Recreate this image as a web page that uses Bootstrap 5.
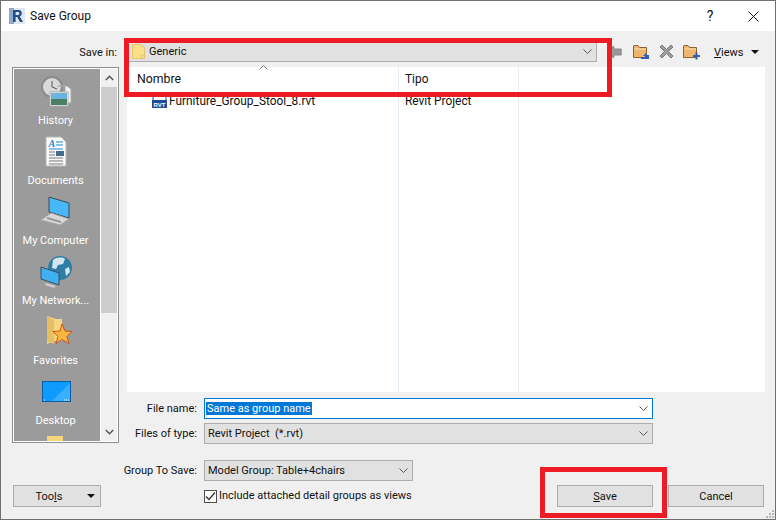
<!DOCTYPE html>
<html lang="en">
<head>
<meta charset="UTF-8">
<title>Save Group</title>
<link href="https://cdn.jsdelivr.net/npm/bootstrap@5.3.2/dist/css/bootstrap.min.css" rel="stylesheet">
<style>
  html, body { margin: 0; background: #f0f0f0; }
  body { font-family: Roboto, "Liberation Sans", sans-serif; font-size: 11px; line-height: 14px; color: #111; overflow: hidden; }
  .dlg { position: relative; width: 776px; height: 520px; border: 1px solid #6f6f6f; background: #f0f0f0; }
  .titlebar { height: 30px; background: #fff; padding-left: 8px; }
  .titlebar .ttl { margin-left: 5px; font-size: 12px; }
  .helpmark { margin-left: auto; width: 12px; text-align: center; font-size: 14px; }
  .closex { margin-left: 32px; margin-right: 16px; }
  .toolrow { height: 36px; padding-top: 5px; }
  .lbl { text-align: right; flex: none; }
  .lbl-top { width: 116px; margin-right: 9px; padding-top: 3px; }
  .combo { background: #e1e1e1; border: 1px solid #adadad; height: 21px; padding: 0 4px 0 5px; }
  .combo .chev { margin-left: auto; }
  .combo-top { width: 471px; }
  .combo-txt { padding-top: 1px; }
  .tool-icons { margin-left: 11px; }
  .tool-back { margin-right: 3px; }
  .views { margin-left: 14px; padding-top: 2px; }
  .caret-dn { width: 0; height: 0; border: 4px solid transparent; border-top: 4px solid #111; border-bottom: 0; border-left-width: 4.5px; border-right-width: 4.5px; }
  .midrow { height: 325px; }
  .places { margin-left: 11px; width: 107px; height: 376px; border: 1px solid #8f8f8f; background: #fff; padding: 1px; }
  .places-in { width: 87px; background: #9b9b9b; overflow: hidden; }
  .place { height: 60px; flex: none; color: #fff; padding: 5px 3px 0 0; }
  .place svg { height: 36px; width: 36px; display: block; }
  .place span { margin-top: 4px; white-space: nowrap; }
  .sbar { width: 16px; margin-left: 1px; background: #f0f0f0; }
  .sbar .arr { height: 18px; }
  .sbar .thumb { height: 226px; background: #cdcdcd; }
  .flist { margin-left: 8px; width: 638px; background: #fff; position: relative; font-size: 11.9px; }
  .fhead { height: 23px; }
  .col-a .fhead { font-size: 12.3px; }
  .col-a { width: 272px; padding-left: 10px; border-right: 1px solid #e5eef7; position: relative; }
  .col-b { width: 120px; padding-left: 6px; border-right: 1px solid #e5eef7; }
  .fcols { height: 325px; }
  .fname { padding-left: 23px; margin-top: 4px; }
  .fname svg { margin-left: -8px; margin-right: 2px; }
  .sort-up { position: absolute; left: 132px; top: -2px; }
  .lbl-form { width: 196px; margin-right: 7px; }
  .field { width: 449px; height: 21px; background: #e1e1e1; border: 1px solid #adadad; padding: 0 4px 0 3px; }
  .field-active { background: #fff; border-color: #0078d7; padding-left: 1px; }
  .sel-text { background: #0078d7; color: #fff; padding: 0 1px; line-height: 13px; }
  .field-group { width: 209px; }
  .row-file { margin-top: 6px; }
  .row-type { margin-top: 4px; }
  .row-group { margin-top: 16px; }
  .row-check { margin-top: 8px; padding-left: 203px; }
  .chk-box { width: 13px; height: 13px; border: 1px solid #4d4d4d; background: #fff; flex: none; margin-right: 2px; }
  .foot { position: absolute; left: 0; right: 0; bottom: 12px; padding-left: 12px; }
  .btn-win { --bs-btn-padding-y: 0; --bs-btn-font-size: 11px; --bs-btn-border-radius: 0; --bs-btn-color: #111; --bs-btn-bg: #e1e1e1; --bs-btn-border-color: #adadad; height: 22px; line-height: 20px; font-family: inherit; padding-top: 1px; }
  .btn-tools { width: 88px; padding-left: 0; padding-right: 16px; position: relative; }
  .btn-tools .caret-dn { position: absolute; right: 5px; top: 8px; }
  .btn-act { width: 96px; }
  .btn-save { margin-left: auto; }
  .btn-cancel { margin-left: 15px; margin-right: 11px; }
  .grip { position: absolute; right: 0; bottom: 0; }
  .redbox { position: absolute; border: 5px solid #ed1c24; pointer-events: none; }
  .red-a { left: 123px; top: 37px; width: 488px; height: 59px; }
  .red-b { left: 539px; top: 466px; width: 127px; height: 51px; }
</style>
</head>
<body>
<div class="dlg d-flex flex-column">

  <div class="titlebar d-flex align-items-center">
    <svg width="16" height="16" viewBox="0 0 16 16"><rect width="16" height="16" fill="#dfe7f0"/><rect x="0" y="0" width="5" height="16" fill="#8fa9c8"/><path d="M4 14V2h5.200c2.400 0 3.600 1.200 3.600 3.300 0 1.600-.8 2.700-2.100 3.100L14 14h-3l-2.800-5H6.600v5z" fill="#1f4f86"/><path d="M6.600 4.100v3h2.300c1 0 1.500-.6 1.500-1.500s-.5-1.500-1.500-1.500z" fill="#dfe7f0"/></svg>
    <span class="ttl">Save Group</span>
    <span class="helpmark">?</span>
    <svg class="closex" width="11" height="11" viewBox="0 0 11 11"><path d="M.5.500l10 10M10.500.500l-10 10" stroke="#111" fill="none"/></svg>
  </div>

  <div class="toolrow d-flex align-items-center">
    <span class="lbl lbl-top">Save in:</span>
    <div class="combo combo-top d-flex align-items-center">
      <svg class="me-1" width="13" height="15" viewBox="0 0 13 15"><path d="M.5.500h8l4 3v11H.5z" fill="#fbdf8a" stroke="#e8c468"/><path d="M9.500 14.500V11h3" fill="none" stroke="#e8c468"/></svg>
      <span class="combo-txt">Generic</span>
      <svg class="chev" width="9" height="6" viewBox="0 0 9 6"><path d="M.5.500l4 4 4-4" fill="none" stroke="#555"/></svg>
    </div>
    <div class="tool-icons d-flex align-items-center gap-2">
      <svg class="tool-back" width="14" height="16" viewBox="0 0 17 16" preserveAspectRatio="none"><path d="M0 8l7-6v3h9v6H7v3z" fill="#9a9a9a" stroke="#808080"/></svg>
      <svg width="17" height="17" viewBox="0 0 17 17"><path d="M.5 3V14.500h13V4.500H6.500L5 2.500H1z" fill="#eeb56f" stroke="#8a6232"/><path d="M1 6h12" stroke="#f8dcb0"/><path d="M8 16h8v-4h-2l-1-2-3 3h2v1H8z" fill="#2f5fb8"/></svg>
      <svg width="17" height="17" viewBox="0 0 17 17"><path d="M4 2L8.500 6.500 13 2l2 2-4.500 4.500L15 13l-2 2-4.500-4.500L4 15l-2-2 4.500-4.500L2 4z" fill="#9c9c9c" stroke="#7a7a7a"/></svg>
      <svg width="17" height="17" viewBox="0 0 17 17"><path d="M.5 3V14.500h13V4.500H6.500L5 2.500H1z" fill="#eeb56f" stroke="#8a6232"/><path d="M1 6h12" stroke="#f8dcb0"/><path d="M10 12h2.500V9.500h2V12H17v2h-2.500v2.500h-2V14H10z" fill="#2f5fb8"/></svg>
    </div>
    <span class="views"><u>V</u>iews</span>
    <span class="caret-dn ms-2"></span>
  </div>

  <div class="midrow d-flex">
    <div class="places d-flex flex-shrink-0">
      <div class="places-in d-flex flex-column">
        <div class="place d-flex flex-column align-items-center">
          <svg viewBox="0 0 36 36"><circle cx="14" cy="13" r="10" fill="#d9d9d9" stroke="#8b8b8b" stroke-width="2"/><path d="M14 7v6l5 2" stroke="#555" fill="none"/><path d="M20 12h9l4 3v14h-6V12z" fill="#f2f2f2" stroke="#a8a8a8"/><rect x="12" y="18" width="18" height="14" fill="#fff" stroke="#aaa"/><rect x="13" y="19" width="16" height="6" fill="#6eb3dc"/><rect x="13" y="25" width="16" height="6" fill="#4a7f62"/></svg>
          <span>History</span>
        </div>
        <div class="place d-flex flex-column align-items-center">
          <svg viewBox="0 0 36 36"><path d="M8 3h15l5 5v24H8z" fill="#fafafa" stroke="#b5b5b5"/><text x="10.500" y="13" font-size="10" font-weight="700" font-style="italic" fill="#1c87d6" font-family="Liberation Serif, serif">A</text><path d="M18 8h7M18 11h7M11 15h14" stroke="#1c87d6"/><path d="M11 18h6M11 21h6M11 24h14M11 27h14M11 30h14" stroke="#777"/><rect x="18" y="17" width="8" height="5" fill="#3e6f8c"/></svg>
          <span>Documents</span>
        </div>
        <div class="place d-flex flex-column align-items-center">
          <svg viewBox="0 0 36 36"><path d="M11 3l20 6v15l-20-6z" fill="#46b7f7" stroke="#3a4a58"/><path d="M13 19l18 6-9 6L3 26z" fill="#d8d8d8" stroke="#a5a5a5"/><path d="M9 24l14 4" stroke="#999" stroke-width="2"/></svg>
          <span>My Computer</span>
        </div>
        <div class="place d-flex flex-column align-items-center">
          <svg viewBox="0 0 36 36"><circle cx="22" cy="14" r="12" fill="#2f7ea6"/><path d="M15 6c4-3 9-3 12-1l-2 5-5 1-2 4-4-1zM27 15l4-2 1 5-4 4z" fill="#d5e6ee"/><path d="M3 13l18 6v12L3 25z" fill="#3fb0f0" stroke="#39505f"/><path d="M8 29l10 3-2 2-9-3z" fill="#ccc"/></svg>
          <span>My Network...</span>
        </div>
        <div class="place d-flex flex-column align-items-center">
          <svg viewBox="0 0 36 36"><path d="M9 2l9 3h6v22l-8 0-7 3z" fill="#f5d67f"/><path d="M9 2l7 4v24l-7-3z" fill="#e5bf62"/><path d="M24 10l3 7 7 .500-5 5 2 7-7-4-6 4 2-7-5-5 7-.5z" fill="#f6b73c" stroke="#c7541e"/></svg>
          <span>Favorites</span>
        </div>
        <div class="place d-flex flex-column align-items-center">
          <svg viewBox="0 0 36 36"><rect x="4.500" y="7.500" width="28" height="20" fill="#0d9bff" stroke="#0a5ea8"/><path d="M14 27L32 9v18z" fill="#39b0ff"/><path d="M6 26h1M26 26h5" stroke="#fff" stroke-dasharray="1 1"/></svg>
          <span>Desktop</span>
        </div>
        <div class="place d-flex flex-column align-items-center">
          <svg viewBox="0 0 36 36"><path d="M9 2h16v34H9z" fill="#f5d67f"/></svg>
        </div>
      </div>
      <div class="sbar d-flex flex-column">
        <div class="arr d-flex align-items-center justify-content-center"><svg width="9" height="6" viewBox="0 0 9 6"><path d="M.8 5l3.700-3.700L8.200 5" fill="none" stroke="#555" stroke-width="1.500"/></svg></div>
        <div class="thumb"></div>
        <div class="flex-grow-1"></div>
        <div class="arr d-flex align-items-center justify-content-center"><svg width="9" height="6" viewBox="0 0 9 6"><path d="M.8 1l3.700 3.700L8.200 1" fill="none" stroke="#555" stroke-width="1.500"/></svg></div>
      </div>
    </div>

    <div class="flist">
      <div class="fcols d-flex">
        <div class="col-a">
          <div class="fhead d-flex align-items-center">Nombre</div>
          <svg class="sort-up" width="9" height="5" viewBox="0 0 9 5"><path d="M.5 4.500l4-4 4 4" fill="none" stroke="#777"/></svg>
          <div class="fname d-flex align-items-center">
            <svg width="15" height="14" viewBox="0 0 15 14"><path d="M1 .5h10l3 3v10H1z" fill="#fff" stroke="#1f4e96"/><rect x="0" y="6" width="15" height="8" fill="#1f4e96"/><text x="1.500" y="12.500" font-size="6" font-weight="700" fill="#fff" font-family="Liberation Sans, sans-serif">RVT</text></svg>
            <span>Furniture_Group_Stool_8.rvt</span>
          </div>
        </div>
        <div class="col-b">
          <div class="fhead d-flex align-items-center">Tipo</div>
          <div class="mt-1">Revit Project</div>
        </div>
      </div>
    </div>
  </div>

  <div class="row-file d-flex align-items-center">
    <span class="lbl lbl-form">File name:</span>
    <div class="field field-active d-flex align-items-center">
      <span class="sel-text">Same as group name</span>
      <svg class="ms-auto" width="9" height="6" viewBox="0 0 9 6"><path d="M.5.500l4 4 4-4" fill="none" stroke="#555"/></svg>
    </div>
  </div>
  <div class="row-type d-flex align-items-center">
    <span class="lbl lbl-form">Files of type:</span>
    <div class="field d-flex align-items-center">
      <span>Revit Project&nbsp; (*.rvt)</span>
      <svg class="ms-auto" width="9" height="6" viewBox="0 0 9 6"><path d="M.5.500l4 4 4-4" fill="none" stroke="#555"/></svg>
    </div>
  </div>
  <div class="row-group d-flex align-items-center">
    <span class="lbl lbl-form">Group To Save:</span>
    <div class="field field-group d-flex align-items-center">
      <span>Model Group: Table+4chairs</span>
      <svg class="ms-auto" width="9" height="6" viewBox="0 0 9 6"><path d="M.5.500l4 4 4-4" fill="none" stroke="#555"/></svg>
    </div>
  </div>
  <div class="row-check d-flex align-items-center">
    <span class="chk-box d-flex align-items-center justify-content-center"><svg width="11" height="9" viewBox="0 0 11 9"><path d="M1 4.500l3 3 6-7" fill="none" stroke="#333" stroke-width="1.300"/></svg></span>
    <span>Include attached detail groups as views</span>
  </div>

  <div class="foot d-flex align-items-center">
    <button type="button" class="btn btn-win btn-tools">Too<u>l</u>s<span class="caret-dn"></span></button>
    <button type="button" class="btn btn-win btn-act btn-save"><u>S</u>ave</button>
    <button type="button" class="btn btn-win btn-act btn-cancel">Cancel</button>
  </div>
  <svg class="grip" width="10" height="10" viewBox="0 0 10 10"><path d="M7 1h2v2H7zM4 4h2v2H4zM7 4h2v2H7zM1 7h2v2H1zM4 7h2v2H4zM7 7h2v2H7z" fill="#b5b5b5"/></svg>

  <div class="redbox red-a"></div>
  <div class="redbox red-b"></div>
</div>
</body>
</html>
